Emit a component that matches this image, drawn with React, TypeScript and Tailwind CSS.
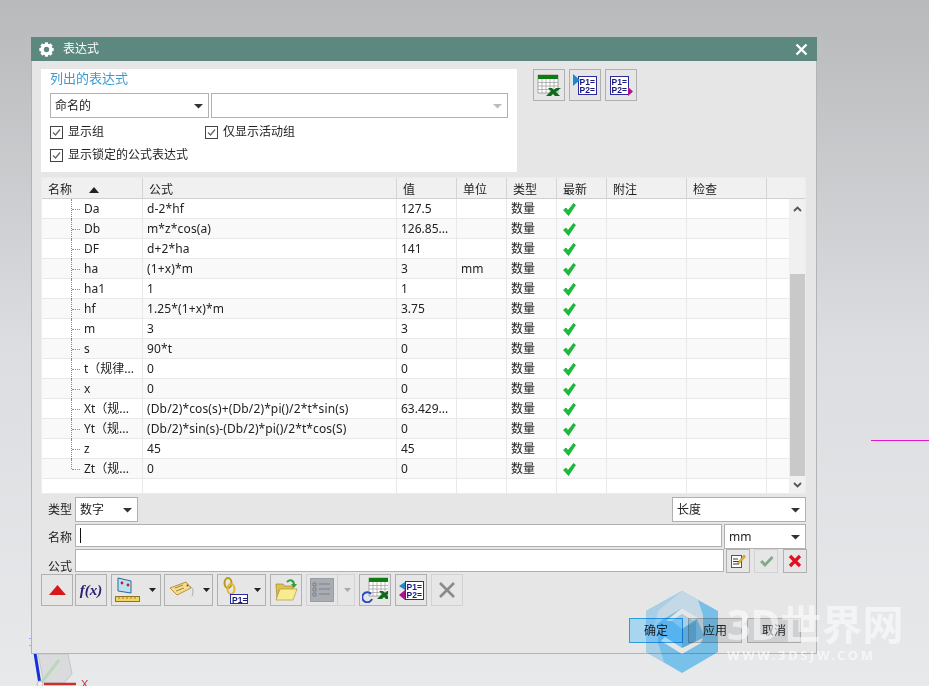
import React from 'react';

const rows = [
  ['Da', 'd-2*hf', '127.5', ''],
  ['Db', 'm*z*cos(a)', '126.85...', ''],
  ['DF', 'd+2*ha', '141', ''],
  ['ha', '(1+x)*m', '3', 'mm'],
  ['ha1', '1', '1', ''],
  ['hf', '1.25*(1+x)*m', '3.75', ''],
  ['m', '3', '3', ''],
  ['s', '90*t', '0', ''],
  ['t（规律...', '0', '0', ''],
  ['x', '0', '0', ''],
  ['Xt（规...', '(Db/2)*cos(s)+(Db/2)*pi()/2*t*sin(s)', '63.429...', ''],
  ['Yt（规...', '(Db/2)*sin(s)-(Db/2)*pi()/2*t*cos(S)', '0', ''],
  ['z', '45', '45', ''],
  ['Zt（规...', '0', '0', ''],
];

const Caret = ({ color = '#333' }: { color?: string }) => (
  <svg width="9" height="6" viewBox="0 0 9 6"><path d="M0 1h9L4.500 5.500z" fill={color} /></svg>
);

const SmallCaret = ({ color = '#222' }: { color?: string }) => (
  <svg width="7" height="4" viewBox="0 0 7 4"><path d="M0 0h7L3.500 4z" fill={color} /></svg>
);

const Check = () => (
  <svg width="13" height="13" viewBox="0 0 13 13">
    <path d="M0.500 7L3 5l2 2.500L10.500 0.500 12.500 2 5.500 12.500z" fill="#12c335" stroke="#0c8f2a" strokeWidth="0.6" />
  </svg>
);

const Select = ({ label, className }: { label: string; className: string }) => (
  <div className={`flex items-center justify-between border border-[#b0b0b0] bg-white pl-[4px] pr-[5px] ${className}`}>
    <span>{label}</span>
    <Caret />
  </div>
);

const Checkbox = ({ label }: { label: string }) => (
  <label className="flex items-center gap-[5px]">
    <span className="flex h-[13px] w-[13px] items-center justify-center border border-[#444] bg-white">
      <svg width="9" height="9" viewBox="0 0 9 9"><path d="M1 4.500l2.500 2.500L8 1.500" fill="none" stroke="#666" strokeWidth="1.300" /></svg>
    </span>
    <span>{label}</span>
  </label>
);

const ToolButton = ({ children, className = 'w-8', disabled }: { children: React.ReactNode; className?: string; disabled?: boolean }) => (
  <div className={`flex h-8 shrink-0 items-center justify-center border ${disabled ? 'border-[#d2d2d2]' : 'border-[#b0b0b0]'} ${className}`}>
    {children}
  </div>
);

const ParamBox = ({ x = 0, y = 0 }: { x?: number; y?: number }) => (
  <g transform={`translate(${x} ${y})`}>
    <rect x="0.500" y="0.500" width="18" height="18" fill="#fff" stroke="#2a2a9c" />
    <text x="1.500" y="8.500" fontSize="8.500" fontWeight="700" fontFamily="Liberation Sans" fill="#1a1a7c">P1=</text>
    <text x="1.500" y="16.500" fontSize="8.500" fontWeight="700" fontFamily="Liberation Sans" fill="#1a1a7c">P2=</text>
  </g>
);

const SheetIcon = ({ x = 0, y = 0 }: { x?: number; y?: number }) => (
  <g transform={`translate(${x} ${y})`}>
    <rect x="0" y="0" width="20" height="18" fill="#fff" stroke="#777" strokeWidth="0.600" />
    <rect x="0" y="0" width="20" height="4" fill="#0f7c0f" />
    <path d="M0 7.500h20M0 11h20M0 14.500h20M4 4v14M8 4v14M12 4v14M16 4v14" stroke="#999" strokeWidth="0.700" />
    <path d="M8 21l5-5-3-3h4l2 2 2-2h5l-5 4 4 4h-5l-2-2-2 2z" fill="#0d6b1a" />
  </g>
);

const Gear = () => (
  <svg width="15" height="15" viewBox="0 0 24 24">
    <circle cx="12" cy="12" r="7" fill="none" stroke="#fff" strokeWidth="5.500" />
    {[0, 45, 90, 135, 180, 225, 270, 315].map((a) => (
      <rect key={a} x="9.500" y="0.500" width="5" height="5" fill="#fff" transform={`rotate(${a} 12 12)`} />
    ))}
  </svg>
);

// multiply so the button labels under the logo stay readable
const Watermark = () => (
  <>
    <svg className="absolute left-[646px] top-[591px] mix-blend-multiply" width="73" height="82" viewBox="0 0 73 82">
      <polygon points="36,0 72,20 72,61 36,82 0,61 0,20" fill="#84d4ff" />
      <polygon points="36,0 0,20 0,61 18,71 12,52 12,32" fill="#bce6ff" />
      <polygon points="36,0 52,9 57,24 57,42 50,26 36,17 16,29 8,36 12,20" fill="#dbf0ff" />
      <polygon points="20,30 36,17 52,27 47,30 36,23 26,30" fill="#ffffff" />
      <polygon points="26,30 36,23 47,30 36,38" fill="#bce6ff" />
      <polygon points="36,38 50,30 50,50 36,58" fill="#68bdee" />
      <polygon points="15,50 19,46 36,57 57,47 55,52 36,63" fill="#ffffff" />
    </svg>
    <div className="absolute left-[727px] top-[596px] text-[41px] font-bold leading-[56px] whitespace-nowrap text-white/55">3D世界网</div>
    <div className="absolute left-[727px] top-[646px] text-[13px] font-bold leading-[18px] tracking-[2.600px] whitespace-nowrap text-white/60">WWW.3DSJW.COM</div>
  </>
);

const columns = 'grid grid-cols-[101px_254px_60px_50px_50px_50px_80px_80px_1fr]';

export default function App() {
  return (
    <div
      className="relative h-[686px] w-[929px] overflow-hidden bg-gradient-to-b from-[#b8b9bb] via-[#dcdde0] to-[#e8e9eb] pl-[31px] pt-[37px] text-[12px] leading-[20px] text-[#222]"
      style={{ fontFamily: '"Noto Sans", "Noto Sans CJK SC", sans-serif' }}
    >
      {/* things behind the dialog */}
      <div className="absolute left-[871px] top-[440px] h-[1px] w-[58px] bg-[#e815d0]" />
      <svg className="absolute left-0 top-[636px]" width="100" height="50" viewBox="0 0 100 50">
        <path d="M30 2v1M30 9v1" stroke="#5570f0" strokeWidth="1" />
        <path d="M38 18h30l4 20-8 9H44z" fill="#dadbdd" stroke="#c6c7c9" />
        <path d="M42 46l17-22" stroke="#bcd6bc" strokeWidth="3" />
        <path d="M35 17l4.500 28" stroke="#1530d8" strokeWidth="3" />
        <path d="M44 48h32" stroke="#c83030" strokeWidth="2.500" />
        <circle cx="40" cy="48" r="3" fill="#eee" stroke="#bbb" />
        <text x="81" y="52" fontSize="11" fontFamily="Liberation Sans" fill="#c83030">X</text>
      </svg>

      <div className="relative flex h-[617px] w-[786px] flex-col border-b border-l border-r border-[#b4b4b4] bg-[#e6e6e6]">
        <div className="-mx-px flex h-6 shrink-0 items-center bg-[#5c8880] pl-[8px] pr-[9px] text-white">
          <Gear />
          <span className="ml-[9px] flex-1">表达式</span>
          <svg width="13" height="13" viewBox="0 0 13 13"><path d="M1.500 1.500l10 10M11.500 1.500l-10 10" stroke="#fff" strokeWidth="2.400" /></svg>
        </div>

        <div className="flex flex-col pl-[9px] pt-2">
          <div className="flex h-[103px]">
            <div className="flex w-[476px] flex-col bg-white px-[9px]">
              <div className="h-[24px] text-[13px] leading-[19px] text-[#3c9ad2]">列出的表达式</div>
              <div className="flex gap-[2px]">
                <Select label="命名的" className="h-[25px] w-[159px]" />
                <div className="flex h-[25px] w-[297px] items-center justify-end border border-[#b0b0b0] bg-white pr-[5px]">
                  <Caret color="#bbb" />
                </div>
              </div>
              <div className="mt-[5px] flex h-[18px] items-center">
                <div className="w-[155px]"><Checkbox label="显示组" /></div>
                <Checkbox label="仅显示活动组" />
              </div>
              <div className="mt-[5px] flex h-[18px] items-center"><Checkbox label="显示锁定的公式表达式" /></div>
            </div>
            <div className="ml-[16px] flex gap-[4px]">
              <ToolButton>
                <svg width="26" height="26" viewBox="0 0 26 26"><SheetIcon x="2" y="3" /></svg>
              </ToolButton>
              <ToolButton>
                <svg width="28" height="28" viewBox="0 0 28 28">
                  <ParamBox x="7" y="5" />
                  <path d="M2 3l7 6-7 6z" fill="#1f88c8" />
                </svg>
              </ToolButton>
              <ToolButton>
                <svg width="28" height="28" viewBox="0 0 28 28">
                  <ParamBox x="3" y="5" />
                  <path d="M21 16l5 4.500-5 4.500z" fill="#b0108c" />
                </svg>
              </ToolButton>
            </div>
          </div>

          <div className="mt-[5px] flex h-[317px] w-[765px] flex-col border border-[#ececec] bg-white">
            <div className={`${columns} h-[21px] shrink-0 border-b border-[#d0d0d0] bg-[#f0f0f0]`}>
              {['名称', '公式', '值', '单位', '类型', '最新', '附注', '检查', ''].map((h, i) => (
                <div key={i} className="flex items-center border-r border-[#d4d4d4] pl-[6px] pt-[2px] last:border-r-0">
                  {h}
                  {i === 0 && (
                    <svg className="ml-[17px]" width="10" height="6" viewBox="0 0 10 6"><path d="M5 0l5 6H0z" fill="#222" /></svg>
                  )}
                </div>
              ))}
            </div>
            <div className="flex min-h-0 flex-1">
              <div className="flex-1">
                {rows.map((r, i) => (
                  <div
                    key={r[0]}
                    className={`${columns} h-5 border-b border-[#e9e9e9] ${i % 2 ? 'bg-[#f9f9f9]' : 'bg-white'}`}
                  >
                    <div className="flex items-center whitespace-nowrap border-r border-[#e9e9e9] pl-[29px]">
                      <span className={`w-0 self-start border-l border-dotted border-[#888] ${i === rows.length - 1 ? 'h-[10px]' : 'h-5'}`} />
                      <span className="mr-[4px] w-[8px] border-t border-dotted border-[#888]" />
                      <span>{r[0]}</span>
                    </div>
                    <div className="flex items-center whitespace-nowrap border-r border-[#e9e9e9] pl-[4px] tracking-[0.130px]">{r[1]}</div>
                    <div className="flex items-center whitespace-nowrap border-r border-[#e9e9e9] pl-[4px]">{r[2]}</div>
                    <div className="flex items-center border-r border-[#e9e9e9] pl-[4px]">{r[3]}</div>
                    <div className="flex items-center border-r border-[#e9e9e9] pl-[4px]">数量</div>
                    <div className="flex items-center border-r border-[#e9e9e9] pl-[6px]"><Check /></div>
                    <div className="border-r border-[#e9e9e9]" />
                    <div className="border-r border-[#e9e9e9]" />
                    <div />
                  </div>
                ))}
                <div className={`${columns} h-[14px]`}>
                  {[0, 1, 2, 3, 4, 5, 6, 7].map((c) => <div key={c} className="border-r border-[#e9e9e9]" />)}
                </div>
              </div>
              <div className="flex w-[16px] shrink-0 flex-col bg-[#f0f0f0]">
                <div className="flex h-[19px] items-center justify-center">
                  <svg width="9" height="6" viewBox="0 0 9 6"><path d="M1 5l3.500-3.500L8 5" fill="none" stroke="#555" strokeWidth="1.800" /></svg>
                </div>
                <div className="mx-auto mt-[56px] h-[202px] w-[15px] bg-[#c9c9c9]" />
                <div className="mt-auto flex h-[16px] items-center justify-center">
                  <svg width="9" height="6" viewBox="0 0 9 6"><path d="M1 1l3.500 3.500L8 1" fill="none" stroke="#555" strokeWidth="1.800" /></svg>
                </div>
              </div>
            </div>
          </div>

          <div className="mt-[3px] flex h-[25px] w-[765px] items-center justify-between pl-[7px]">
            <div className="flex items-center">
              <span className="w-[27px]">类型</span>
              <Select label="数字" className="h-[25px] w-[63px]" />
            </div>
            <Select label="长度" className="h-[25px] w-[134px]" />
          </div>

          <div className="mt-[2px] flex h-[25px] w-[765px] items-center pl-[7px]">
            <span className="w-[27px] pt-[2px]">名称</span>
            <div className="flex h-[23px] w-[647px] items-center self-start border border-[#b0b0b0] bg-white pl-[4px]">
              <span className="h-[15px] w-px bg-[#111]" />
            </div>
            <Select label="mm" className="ml-[2px] h-[25px] flex-1" />
          </div>

          <div className="flex h-[25px] w-[766px] pl-[7px]">
            <span className="flex w-[27px] items-end leading-[14px]">公式</span>
            <div className="h-[23px] w-[649px] border border-[#b0b0b0] bg-white" />
            <div className="ml-[2px] flex h-[24px] w-[24px] items-center justify-center border border-[#b0b0b0]">
              <svg width="16" height="16" viewBox="0 0 16 16">
                <rect x="1.500" y="2.500" width="10" height="12" fill="#fff" stroke="#3a4fc0" />
                <path d="M3 6h5M3 8.500h6M3 11h6" stroke="#222" strokeWidth="0.900" />
                <path d="M8 9l6-7 1.500 1.500-6 7-2 .5z" fill="#e8b820" stroke="#7a5a10" strokeWidth="0.400" />
              </svg>
            </div>
            <div className="ml-[4px] flex h-[24px] w-[24px] items-center justify-center border border-[#d2d2d2]">
              <svg width="15" height="13" viewBox="0 0 15 13"><path d="M1 7l2.500-2 2.500 3L12.500 1 14.500 3 6 12z" fill="#86a888" /></svg>
            </div>
            <div className="ml-[5px] flex h-[24px] w-[24px] items-center justify-center border border-[#b0b0b0]">
              <svg width="14" height="14" viewBox="0 0 14 14"><path d="M2 2l10 10M12 2L2 12" stroke="#e01020" strokeWidth="3.200" /></svg>
            </div>
          </div>

          <div className="flex h-8 items-center">
            <ToolButton>
              <svg width="17" height="10" viewBox="0 0 17 10"><path d="M8.500 0l8.500 10H0z" fill="#d81818" /></svg>
            </ToolButton>
            <ToolButton className="ml-[2px] w-8">
              <span className="font-['Liberation_Serif'] text-[15px] font-bold italic text-[#2a2070]">f(x)</span>
            </ToolButton>
            <ToolButton className="ml-[4px] w-[50px] justify-start pl-[3px]">
              <svg width="26" height="26" viewBox="0 0 26 26">
                <path d="M3 1l13 3v12L3 14z" fill="#bfe0f0" stroke="#2a6a9a" />
                <circle cx="7" cy="6" r="1.400" fill="#d01818" />
                <circle cx="13" cy="8" r="1.400" fill="#d01818" />
                <rect x="0.500" y="19.500" width="24" height="5" fill="#f0d860" stroke="#8a7428" />
                <path d="M4 20v2M8 20v2M12 20v2M16 20v2M20 20v2" stroke="#c83020" strokeWidth="0.700" />
              </svg>
              <span className="ml-[8px] flex"><SmallCaret /></span>
            </ToolButton>
            <ToolButton className="ml-[3px] w-[49px] justify-start pl-[4px]">
              <svg width="26" height="22" viewBox="0 0 26 22">
                <path d="M1 9l16-6 5 6-14 7z" fill="#f4dc90" stroke="#b89040" />
                <circle cx="18.500" cy="6.500" r="1" fill="#c03020" />
                <path d="M6 9l8-3M7 12l8-3" stroke="#8a6a2a" strokeWidth="0.800" />
                <path d="M20 7c4 1 5 5 3 10" fill="none" stroke="#aaa" />
              </svg>
              <span className="ml-[8px] flex"><SmallCaret /></span>
            </ToolButton>
            <ToolButton className="ml-[4px] w-[49px] justify-start pl-[3px]">
              <svg width="28" height="28" viewBox="0 0 28 28">
                <ellipse cx="7" cy="7" rx="3.500" ry="5" fill="none" stroke="#b89818" strokeWidth="2" />
                <ellipse cx="10" cy="13" rx="3.500" ry="5" fill="none" stroke="#e0b828" strokeWidth="2" />
                <rect x="9.500" y="18.500" width="17" height="9" fill="#fff" stroke="#2a2a9c" />
                <text x="11" y="26.500" fontSize="8.500" fontWeight="700" fontFamily="Liberation Sans" fill="#1a1a7c">P1=</text>
              </svg>
              <span className="ml-[5px] flex"><SmallCaret /></span>
            </ToolButton>
            <ToolButton className="ml-[4px] w-8">
              <svg width="24" height="24" viewBox="0 0 24 24">
                <path d="M2 6h7l2 2h8v4H5L3 21z" fill="#e0c050" stroke="#a08830" strokeWidth="0.700" />
                <path d="M6 11h17l-4 11H2z" fill="#f8ec90" stroke="#b89a38" strokeWidth="0.700" />
                <path d="M13 4c3-3 7-2 7 3" fill="none" stroke="#30a040" strokeWidth="2" />
                <path d="M17 6h6l-3 4z" fill="#30a040" />
              </svg>
            </ToolButton>
            <ToolButton disabled className="ml-[4px] w-[49px] justify-start pl-[3px]">
              <svg width="24" height="24" viewBox="0 0 24 24">
                <rect x="0.500" y="0.500" width="23" height="23" fill="#a9adb3" stroke="#9a9ea4" />
                <path d="M3 5h3v3H3zM3 10h3v3H3zM3 15h3v3H3z" fill="none" stroke="#7d8187" />
                <path d="M9 6h11M9 11h11M9 16h11" stroke="#7d8187" />
              </svg>
              <span className="ml-[3px] mr-[6px] h-full w-px bg-[#d2d2d2]" />
              <SmallCaret color="#aaa" />
            </ToolButton>
            <ToolButton className="ml-[4px] w-8">
              <svg width="26" height="26" viewBox="0 0 26 26">
                <SheetIcon x="7" y="1" />
                <path d="M10 18a5 5 0 1 0 1 5" fill="none" stroke="#2a4ac0" strokeWidth="2" transform="translate(-1 -1)" />
              </svg>
            </ToolButton>
            <ToolButton className="ml-[4px] w-8">
              <svg width="28" height="28" viewBox="0 0 28 28">
                <ParamBox x="8" y="5" />
                <path d="M8 6L2 10l6 4z" fill="#1f88c8" />
                <path d="M8 14l-6 5 6 5z" fill="#b0108c" />
              </svg>
            </ToolButton>
            <ToolButton disabled className="ml-[4px] w-8">
              <svg width="18" height="18" viewBox="0 0 18 18"><path d="M2 2l14 14M16 2L2 16" stroke="#8a8a8a" strokeWidth="2.600" /></svg>
            </ToolButton>
          </div>

          <div className="mt-[12px] flex w-[760px] justify-end gap-[5px]">
            <div className="flex h-[25px] w-[54px] items-center justify-center border border-[#2f9bd8] bg-[#a8d6f0]">确定</div>
            <div className="flex h-[25px] w-[54px] items-center justify-center border border-[#a8a8a8] bg-[#cfd0d2]">应用</div>
            <div className="flex h-[25px] w-[54px] items-center justify-center border border-[#a8a8a8] bg-[#cfd0d2]">取消</div>
          </div>
        </div>
      </div>

      <Watermark />
    </div>
  );
}
